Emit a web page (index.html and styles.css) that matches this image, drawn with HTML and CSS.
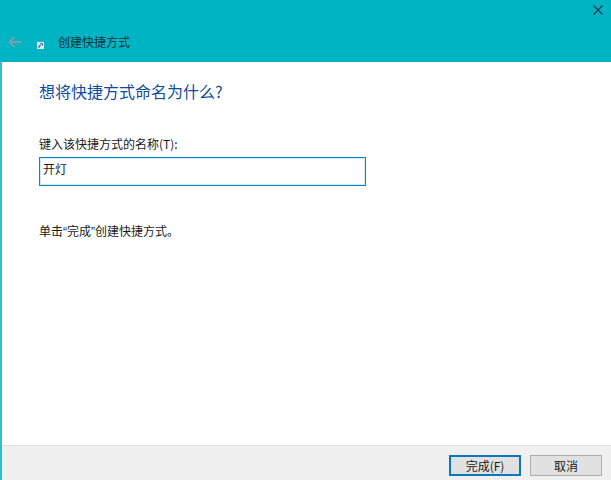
FILE: index.html
```html
<!DOCTYPE html>
<html lang="zh-CN">
<head>
<meta charset="utf-8">
<title>创建快捷方式</title>
<link rel="stylesheet" href="styles.css">
</head>
<body>
<div class="window">
  <header class="titlebar">
    <div class="close-row">
      <svg class="close-icon" width="10" height="10" viewBox="0 0 10 10"><path d="M0.5 0.5L9.5 9.5M9.5 0.5L0.5 9.5" stroke="#12324f" stroke-width="1.1" fill="none"/></svg>
    </div>
    <div class="nav-row">
      <svg class="back-icon" width="14" height="12" viewBox="0 0 14 12"><path d="M6.5 1L1.5 6L6.5 11M1.5 6H14" stroke="#9a9aa2" stroke-width="1.4" fill="none"/></svg>
      <svg class="app-icon" width="7" height="7" viewBox="0 0 7 7"><rect width="7" height="7" fill="#dfe8f4"/><path d="M2 6L2 4L4 3M3.4 1.6H5.4V3.6" stroke="#1f4f8f" stroke-width="1" fill="none"/></svg>
      <span class="wizard-title">创建快捷方式</span>
    </div>
  </header>
  <main class="content">
    <h1 class="heading">想将快捷方式命名为什么?</h1>
    <label class="field-label" for="name">键入该快捷方式的名称(T):</label>
    <input class="name-input" id="name" type="text" value="开灯">
    <p class="hint">单击“完成”创建快捷方式。</p>
  </main>
  <footer class="footer">
    <button class="btn btn-primary" type="button">完成(F)</button>
    <button class="btn" type="button">取消</button>
  </footer>
</div>
</body>
</html>
```
FILE: styles.css
```css
* { box-sizing: border-box; }
html, body { margin: 0; height: 100%; overflow: hidden; }
body {
  background: #fff;
  color: #1a1a1a;
  font-family: "Noto Sans CJK SC", "Liberation Sans", sans-serif;
  font-size: 12px;
}
.window {
  height: 480px;
  display: flex;
  flex-direction: column;
  border-left: 2px solid #2fc0cc;
}
.titlebar {
  height: 62px;
  margin-left: -2px;
  background: #00b4c3;
  display: flex;
  flex-direction: column;
}
.close-row {
  height: 33px;
  display: flex;
  justify-content: flex-end;
  padding: 5px 8px 0 0;
}
.close-icon { display: block; }
.nav-row {
  display: flex;
  align-items: center;
  height: 18px;
  padding-left: 8px;
}
.back-icon { display: block; }
.app-icon { display: block; margin: 7px 0 0 15px; }
.wizard-title {
  margin-left: 14px;
  font-size: 12px;
  line-height: 16px;
  color: #10303a;
}
.content {
  flex: 1;
  padding: 19px 0 0 37px;
  display: flex;
  flex-direction: column;
  align-items: flex-start;
}
.heading {
  margin: 0;
  font-size: 16px;
  line-height: 21px;
  font-weight: 400;
  color: #0f4a9c;
}
.field-label {
  margin-top: 33px;
  line-height: 17px;
  font-size: 12px;
}
.name-input {
  margin-top: 5px;
  width: 327px;
  height: 29px;
  padding: 0 0 7px 3px;
  border: 1px solid #0088c8;
  box-shadow: inset 0 0 0 1px rgba(0, 136, 200, 0.18);
  outline: none;
  background: #fff;
  color: #1a1a1a;
  font: inherit;
  font-size: 12px;
}
.hint {
  margin: 38px 0 0;
  line-height: 17px;
  font-family: "Liberation Sans", "Noto Sans CJK SC", sans-serif;
}
.footer {
  height: 35px;
  background: #f0f0f0;
  border-top: 1px solid #dfdfdf;
  display: flex;
  justify-content: flex-end;
  gap: 9px;
  padding: 9px 9px 0 0;
}
.btn {
  width: 72px;
  height: 21px;
  padding: 0;
  background: #e1e1e1;
  border: 1px solid #adadad;
  color: #1a1a1a;
  font: inherit;
  font-size: 12px;
  line-height: 19px;
}
.btn-primary { border: 2px solid #0a78c0; line-height: 17px; }
```
